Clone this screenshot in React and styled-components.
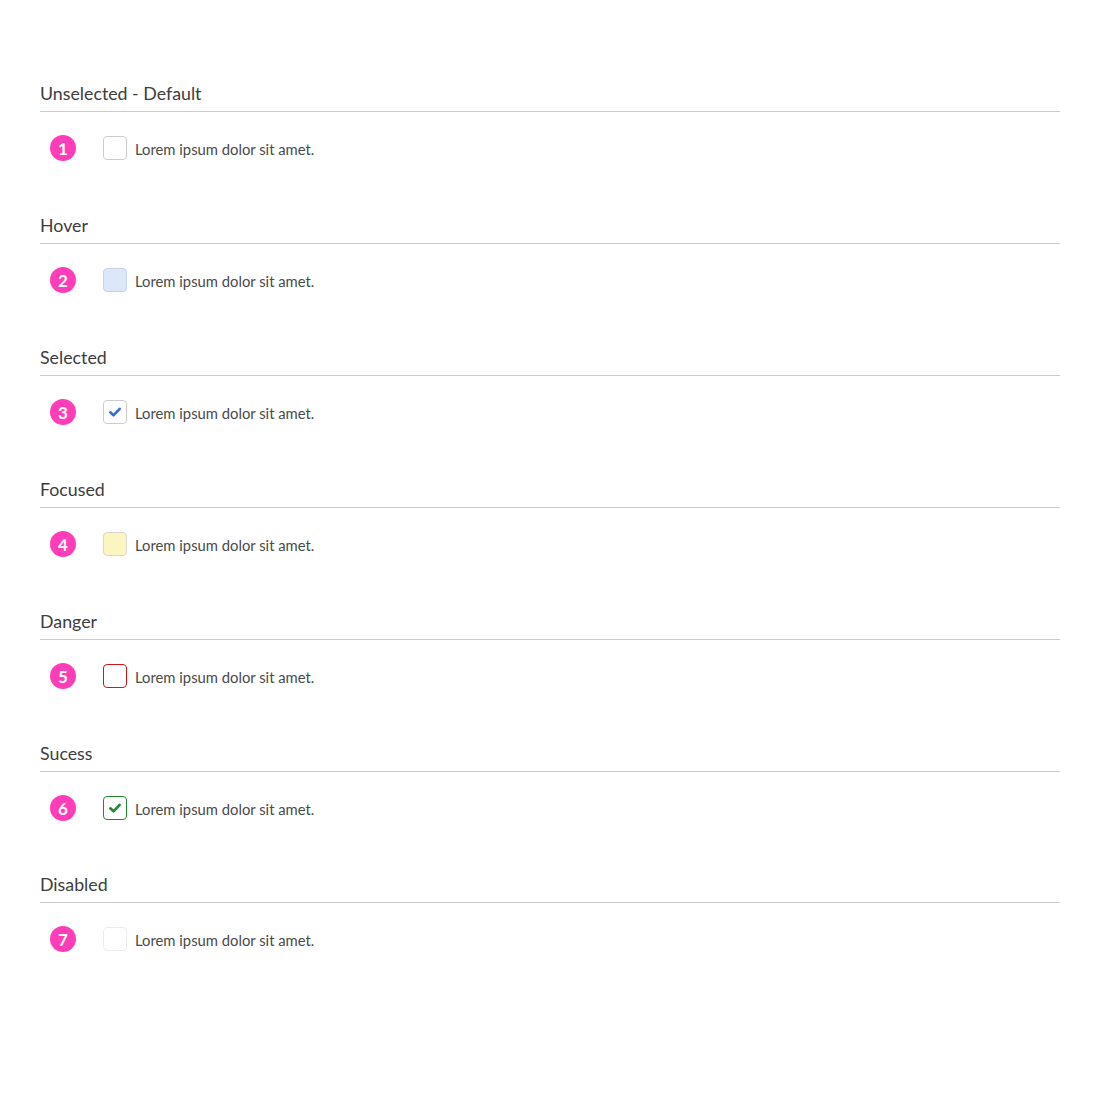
import React from 'react';
import styled, {createGlobalStyle} from 'styled-components';

const GlobalStyle = createGlobalStyle`
  body {
    margin: 0;
    background: #fff;
    font-family: 'Lato', 'Open Sans', sans-serif;
    color: #333;
  }
`;

const Page = styled.div`
  padding: 82px 40px 40px 40px;
  width: 1020px;
`;

const Section = styled.section`
  margin-bottom: 54px;
  &:nth-of-type(6) {
    margin-bottom: 53px;
  }
`;

const Heading = styled.div`
  font-size: 17.8px;
  line-height: 22px;
  font-weight: 400;
  color: #3d3d3d;
  padding-bottom: 7px;
  border-bottom: 1px solid #cccccc;
`;

const Row = styled.div`
  display: flex;
  align-items: center;
  height: 24px;
  margin-top: 24px;
  padding-left: 10px;
`;

const Badge = styled.div`
  width: 26px;
  height: 26px;
  border-radius: 50%;
  background: #ff3db9;
  color: #fff;
  font-size: 17px;
  font-weight: 700;
  display: flex;
  align-items: center;
  justify-content: center;
  margin-right: 27px;
`;

const Box = styled.div`
  box-sizing: border-box;
  width: 24px;
  height: 24px;
  border-radius: 4px;
  border: 1px solid ${props => props.border || '#cccccc'};
  background: ${props => props.bg || '#fff'};
  display: flex;
  align-items: center;
  justify-content: center;
  margin-right: 8px;
`;

const Label = styled.span`
  font-size: 14.8px;
  font-weight: 400;
  color: #4a4a4a;
  padding-top: 1px;
`;

const Check = ({color}) => (
  <svg width="14" height="14" viewBox="0 0 14 14">
    <path
      d="M2.3 7.3 L5.5 10.3 L11.7 3.9"
      fill="none"
      stroke={color}
      strokeWidth="2.6"
      strokeLinecap="round"
      strokeLinejoin="round"
    />
  </svg>
);

const states = [
  {title: 'Unselected - Default'},
  {title: 'Hover', bg: '#dce8fa', border: '#c9d2de'},
  {title: 'Selected', check: '#2e6fdc'},
  {title: 'Focused', bg: '#fcf5c0', border: '#d8d8d0'},
  {title: 'Danger', border: '#d61414'},
  {title: 'Sucess', border: '#1d8a2e', check: '#1d8a2e'},
  {title: 'Disabled', border: '#ececec'},
];

const App = () => (
  <Page>
    <GlobalStyle />
    {states.map ((s, i) => (
      <Section key={s.title}>
        <Heading>{s.title}</Heading>
        <Row>
          <Badge>{i + 1}</Badge>
          <Box bg={s.bg} border={s.border}>
            {s.check && <Check color={s.check} />}
          </Box>
          <Label>Lorem ipsum dolor sit amet.</Label>
        </Row>
      </Section>
    ))}
  </Page>
);

export default App;
